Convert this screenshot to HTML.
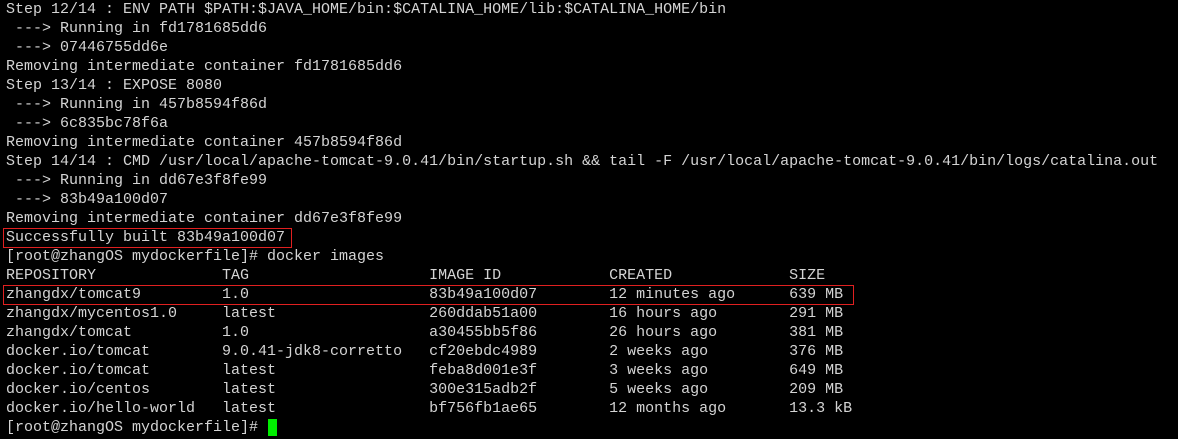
<!DOCTYPE html><html><head><style>
body{margin:0;background:#000;width:1178px;height:439px;overflow:hidden;position:relative}
pre{margin:0;position:absolute;left:6px;top:0;font:15px/19px "Liberation Mono",monospace;color:#d4d4d4}
.b{position:absolute;border:1px solid #e02020}
.c{position:absolute;left:268px;top:419px;width:9px;height:17px;background:#00ee00}
</style></head><body><pre>Step 12/14 : ENV PATH $PATH:$JAVA_HOME/bin:$CATALINA_HOME/lib:$CATALINA_HOME/bin
 ---&gt; Running in fd1781685dd6
 ---&gt; 07446755dd6e
Removing intermediate container fd1781685dd6
Step 13/14 : EXPOSE 8080
 ---&gt; Running in 457b8594f86d
 ---&gt; 6c835bc78f6a
Removing intermediate container 457b8594f86d
Step 14/14 : CMD /usr/local/apache-tomcat-9.0.41/bin/startup.sh &amp;&amp; tail -F /usr/local/apache-tomcat-9.0.41/bin/logs/catalina.out
 ---&gt; Running in dd67e3f8fe99
 ---&gt; 83b49a100d07
Removing intermediate container dd67e3f8fe99
Successfully built 83b49a100d07
[root@zhangOS mydockerfile]# docker images
REPOSITORY              TAG                    IMAGE ID            CREATED             SIZE
zhangdx/tomcat9         1.0                    83b49a100d07        12 minutes ago      639 MB
zhangdx/mycentos1.0     latest                 260ddab51a00        16 hours ago        291 MB
zhangdx/tomcat          1.0                    a30455bb5f86        26 hours ago        381 MB
docker.io/tomcat        9.0.41-jdk8-corretto   cf20ebdc4989        2 weeks ago         376 MB
docker.io/tomcat        latest                 feba8d001e3f        3 weeks ago         649 MB
docker.io/centos        latest                 300e315adb2f        5 weeks ago         209 MB
docker.io/hello-world   latest                 bf756fb1ae65        12 months ago       13.3 kB
[root@zhangOS mydockerfile]# </pre>
<div class="b" style="left:3px;top:228px;width:287px;height:18px"></div>
<div class="b" style="left:3px;top:285px;width:849px;height:18px"></div>
<div class="c"></div>
</body></html>
